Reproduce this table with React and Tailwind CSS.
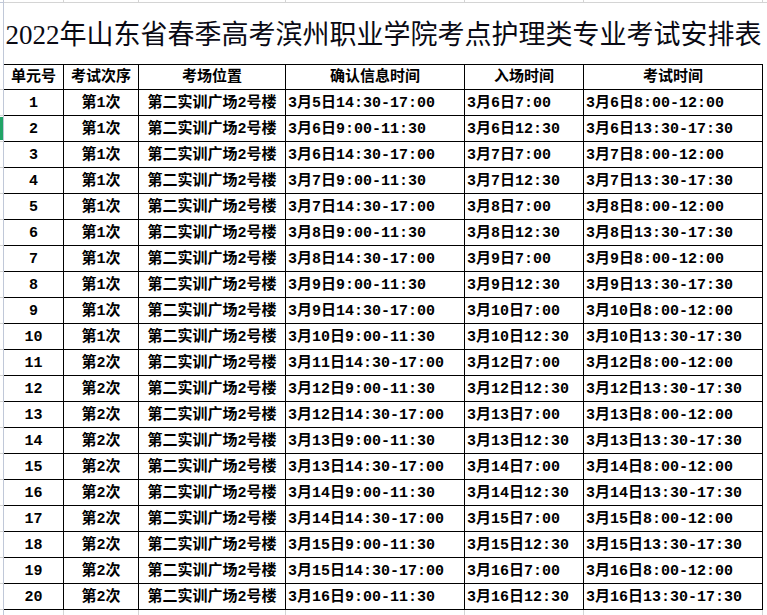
const rows = [
  ['1', '第1次', '3月5日14:30-17:00', '3月6日7:00', '3月6日8:00-12:00'],
  ['2', '第1次', '3月6日9:00-11:30', '3月6日12:30', '3月6日13:30-17:30'],
  ['3', '第1次', '3月6日14:30-17:00', '3月7日7:00', '3月7日8:00-12:00'],
  ['4', '第1次', '3月7日9:00-11:30', '3月7日12:30', '3月7日13:30-17:30'],
  ['5', '第1次', '3月7日14:30-17:00', '3月8日7:00', '3月8日8:00-12:00'],
  ['6', '第1次', '3月8日9:00-11:30', '3月8日12:30', '3月8日13:30-17:30'],
  ['7', '第1次', '3月8日14:30-17:00', '3月9日7:00', '3月9日8:00-12:00'],
  ['8', '第1次', '3月9日9:00-11:30', '3月9日12:30', '3月9日13:30-17:30'],
  ['9', '第1次', '3月9日14:30-17:00', '3月10日7:00', '3月10日8:00-12:00'],
  ['10', '第1次', '3月10日9:00-11:30', '3月10日12:30', '3月10日13:30-17:30'],
  ['11', '第2次', '3月11日14:30-17:00', '3月12日7:00', '3月12日8:00-12:00'],
  ['12', '第2次', '3月12日9:00-11:30', '3月12日12:30', '3月12日13:30-17:30'],
  ['13', '第2次', '3月12日14:30-17:00', '3月13日7:00', '3月13日8:00-12:00'],
  ['14', '第2次', '3月13日9:00-11:30', '3月13日12:30', '3月13日13:30-17:30'],
  ['15', '第2次', '3月13日14:30-17:00', '3月14日7:00', '3月14日8:00-12:00'],
  ['16', '第2次', '3月14日9:00-11:30', '3月14日12:30', '3月14日13:30-17:30'],
  ['17', '第2次', '3月14日14:30-17:00', '3月15日7:00', '3月15日8:00-12:00'],
  ['18', '第2次', '3月15日9:00-11:30', '3月15日12:30', '3月15日13:30-17:30'],
  ['19', '第2次', '3月15日14:30-17:00', '3月16日7:00', '3月16日8:00-12:00'],
  ['20', '第2次', '3月16日9:00-11:30', '3月16日12:30', '3月16日13:30-17:30'],
];

const headers = ['单元号', '考试次序', '考场位置', '确认信息时间', '入场时间', '考试时间'];

const cell = 'border-r border-b border-black flex items-center pt-[3px] whitespace-nowrap overflow-hidden';
const center = cell + ' justify-center';
const left = cell + ' pl-[2px]';

export default function App() {
  return (
    <div className="w-[767px] h-[615px] bg-white overflow-hidden text-black">
      <div className="grid grid-cols-[4px_60px_75px_147px_179px_119px_179px_4px] grid-rows-[3px_61px_26px_repeat(20,26px)_5px] font-['Liberation_Mono','Noto_Sans_CJK_SC',monospace] text-[15px] font-bold">
        {/* top gridline strip */}
        <div className="border-r border-b border-[#c0c8d8]" />
        {[0, 1, 2, 3, 4, 5].map((i) => (
          <div key={i} className="border-r border-b border-[#d4d4d4]" />
        ))}
        <div className="border-b border-[#d4d4d4]" />

        {/* title */}
        <div className="border-r border-[#c0c8d8]" />
        <div className="col-span-6 flex items-center justify-center pt-[4px] whitespace-nowrap font-['Liberation_Serif','Noto_Sans_CJK_SC',serif] font-normal text-[27px] text-[#0a0a14]">
          2022年山东省春季高考滨州职业学院考点护理类专业考试安排表
        </div>
        <div />

        {/* header */}
        <div className="border-r border-b border-[#c0c8d8] border-b-[#d4d4d4]" />
        {headers.map((h) => (
          <div key={h} className={center + ' border-t'}>
            {h}
          </div>
        ))}
        <div />

        {rows.map((r, idx) => (
          <div key={r[0]} className="contents">
            <div className="border-r border-b border-[#c0c8d8] border-b-[#d4d4d4] flex items-center">
              {idx === 1 && <div className="w-[3px] h-[23px] bg-[#21a366]" />}
            </div>
            <div className={center}>{r[0]}</div>
            <div className={center}>{r[1]}</div>
            <div className={center}>第二实训广场2号楼</div>
            <div className={left}>{r[2]}</div>
            <div className={left}>{r[3]}</div>
            <div className={left}>{r[4]}</div>
            <div />
          </div>
        ))}

        {/* bottom gridline strip */}
        <div className="border-r border-[#c0c8d8]" />
        {[0, 1, 2, 3, 4, 5].map((i) => (
          <div key={i} className="border-r border-[#d4d4d4]" />
        ))}
        <div />
      </div>
    </div>
  );
}
